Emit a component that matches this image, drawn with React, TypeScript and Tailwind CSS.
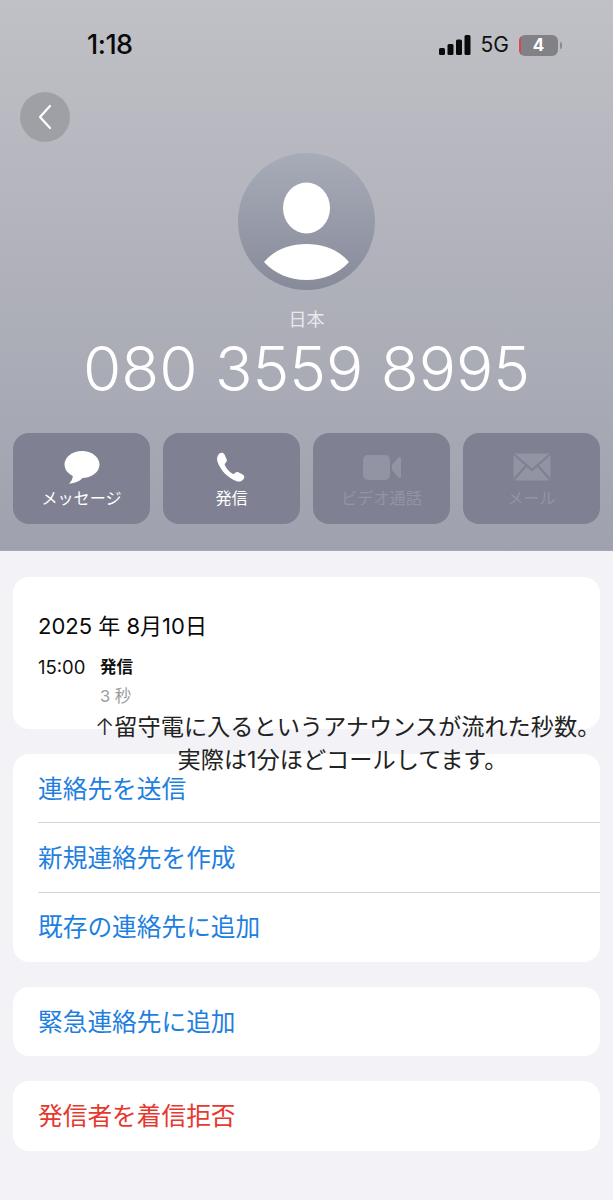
import React from "react";

const font = "font-['Inter','Noto_Sans_CJK_JP',sans-serif]";

const MessageIcon = () => (
  <svg width="36" height="33" viewBox="0 0 36 33" fill="#ffffff">
    <ellipse cx="18" cy="13.5" rx="17.5" ry="13.5" />
    <path d="M9 22 C9 27 8 30 5 32.5 C11 32.5 16 30 19 26.5 Z" />
  </svg>
);

const PhoneIcon = () => (
  <svg className="mr-[3px]" width="30" height="30" viewBox="0 0 30 30" fill="#ffffff">
    <path d="M4.5 1.5 C6.5 0 8.5 0.5 9.5 2.5 L11.5 7 C12.2 8.6 11.8 9.8 10.5 11 C9.6 11.8 9.5 12.6 10 13.6 C11.8 17 14 19.6 17.2 21.6 C18.2 22.2 19 22 19.8 21.2 C21 20 22.3 19.7 23.8 20.5 L27.6 22.6 C29.4 23.6 29.8 25.4 28.6 27 C26.8 29.4 24 30.2 21 29 C12.5 25.6 5.8 18.6 2.6 10 C1.5 6.8 2.2 3.4 4.5 1.5 Z" />
  </svg>
);

const VideoIcon = () => (
  <svg width="38" height="25" viewBox="0 0 38 25" fill="#9294a3">
    <rect x="0" y="0" width="27" height="25" rx="5" />
    <path d="M29 10 L35.5 2.5 C36.5 1.7 38 2.2 38 3.4 V21.6 C38 22.8 36.5 23.3 35.5 22.5 L29 15 Z" />
  </svg>
);

const MailIcon = () => (
  <svg width="38" height="28" viewBox="0 0 38 28" fill="#9294a3">
    <path d="M1.5 0.5 H36.5 L19 15.5 Z" />
    <path d="M0.5 2 L12 12.5 L0.5 25 Z" />
    <path d="M37.5 2 L26 12.5 L37.5 25 Z" />
    <path d="M1.5 27.5 L13.5 14 L19 18.5 L24.5 14 L36.5 27.5 Z" />
  </svg>
);

const ActionButton = ({
  icon,
  label,
  disabled,
}: {
  icon: React.ReactNode;
  label: string;
  disabled?: boolean;
}) => (
  <div className="w-[137px] h-[91px] rounded-[16px] bg-[#7f8192] flex flex-col items-center">
    <div className="h-[38px] mt-[15px] flex items-center justify-center">{icon}</div>
    <span className={`text-[16.1px] leading-[20px] mt-[2px] ${disabled ? "text-[#9294a3]" : "text-white"}`}>{label}</span>
  </div>
);

const LinkRow = ({ label, color, border }: { label: string; color: string; border?: boolean }) => (
  <div className={`h-[69.33px] ml-[25px] flex items-center ${border ? "border-b border-[#d6d6da] pt-[2px]" : ""}`}>
    <span className={`text-[24.7px] leading-[30px] ${color}`}>{label}</span>
  </div>
);

export default function App() {
  return (
    <div className={`relative w-[613px] h-[1200px] overflow-hidden bg-[#f2f2f7] ${font}`}>
      <div className="h-[551px] bg-gradient-to-b from-[#c0c1c6] to-[#9fa1ae] border-b border-[#a5a6b2]">
        {/* status bar */}
        <div className="h-[92px] flex justify-between items-start pt-[28px] pl-[87px] pr-[51px]">
          <span className="text-[27px] leading-[34px] font-medium text-[#0a0a0a] tracking-[-0.5px]">1:18</span>
          <div className="flex items-center h-[34px]">
            <svg width="32" height="20" viewBox="0 0 32 20" fill="#0a0a0a">
              <rect x="0" y="13" width="6" height="7" rx="1.5" />
              <rect x="8.5" y="9" width="6" height="11" rx="1.5" />
              <rect x="17" y="4.5" width="6" height="15.5" rx="1.5" />
              <rect x="25.5" y="0" width="6" height="20" rx="1.5" />
            </svg>
            <span className="text-[21px] ml-[10px] text-[#111]">5G</span>
            <div className="relative ml-[10px] w-[39px] h-[21px] rounded-[6px] bg-[#828286] flex items-center justify-center overflow-hidden">
              <div className="absolute left-0 top-0 bottom-0 w-[2px] bg-[#d9494c]" />
              <span className="text-[17px] leading-[21px] font-bold text-white">4</span>
            </div>
            <div className="ml-[2px] w-[2px] h-[7px] rounded-r-full bg-[#8b8b90]" />
          </div>
        </div>

        <div className="ml-[20px] w-[50px] h-[50px] rounded-full bg-[#9fa0a6] flex items-center justify-center">
          <svg width="16" height="26" viewBox="0 0 16 26" fill="none" stroke="#ffffff" strokeWidth="2.2" strokeLinecap="round" strokeLinejoin="round">
            <path d="M13 2 L3 13 L13 24" />
          </svg>
        </div>

        <svg className="mx-auto mt-[11px]" width="137" height="137" viewBox="0 0 137 137">
          <defs>
            <linearGradient id="avatar" x1="0" y1="0" x2="0" y2="1">
              <stop offset="0" stopColor="#a8acb9" />
              <stop offset="1" stopColor="#878a98" />
            </linearGradient>
          </defs>
          <circle cx="68.5" cy="68.5" r="68.5" fill="url(#avatar)" />
          <ellipse cx="68.5" cy="55" rx="23.5" ry="25.5" fill="#ffffff" />
          <path d="M26 109 C36 97 51 91 68.5 91 C86 91 101 97 111 109 C101 120 86 127 68.5 127 C51 127 36 120 26 109 Z" fill="#ffffff" />
        </svg>

        <div className="mt-[18px] text-center text-[18px] leading-[24px] text-[#e8e8ec]">日本</div>
        <div className="mt-[3px] text-center text-[62px] leading-[68px] font-[350] text-white whitespace-nowrap">080 3559 8995</div>

        <div className="mt-[30px] px-[13px] flex gap-[13px]">
          <ActionButton icon={<MessageIcon />} label="メッセージ" />
          <ActionButton icon={<PhoneIcon />} label="発信" />
          <ActionButton icon={<VideoIcon />} label="ビデオ通話" disabled />
          <ActionButton icon={<MailIcon />} label="メール" disabled />
        </div>
      </div>

      <div className="px-[13px] pt-[26px] flex flex-col gap-[25px]">
        <div className="h-[152px] rounded-[16px] bg-white pl-[25px] pt-[34px]">
          <div className="text-[22px] leading-[30px] text-[#0a0a0a]">2025 年 8月10日</div>
          <div className="flex mt-[13px]">
            <span className="w-[62px] text-[18.5px] leading-[26px] text-[#111]">15:00</span>
            <div>
              <div className="text-[16.5px] leading-[26px] font-bold text-[#111]">発信</div>
              <div className="text-[16.5px] leading-[26px] mt-[3px] text-[#9a9a9e]">3 秒</div>
            </div>
          </div>
        </div>

        <div className="rounded-[16px] bg-white">
          <LinkRow label="連絡先を送信" color="text-[#1f7fe0]" border />
          <LinkRow label="新規連絡先を作成" color="text-[#1f7fe0]" border />
          <LinkRow label="既存の連絡先に追加" color="text-[#1f7fe0]" />
        </div>
        <div className="rounded-[16px] bg-white">
          <LinkRow label="緊急連絡先に追加" color="text-[#1f7fe0]" />
        </div>
        <div className="rounded-[16px] bg-white">
          <LinkRow label="発信者を着信拒否" color="text-[#e5392f]" />
        </div>
      </div>

      {/* annotation typed over the screenshot */}
      <div className="absolute left-[95px] top-[711px] w-[496px] text-center text-[#222]">
        <div className="text-[23.2px] leading-[33px] whitespace-nowrap"><span className="font-light">↑</span>留守電に入るというアナウンスが流れた秒数。</div>
        <div className="text-[23.2px] leading-[33px] whitespace-nowrap pr-[1px]">実際は1分ほどコールしてます。</div>
      </div>
    </div>
  );
}
